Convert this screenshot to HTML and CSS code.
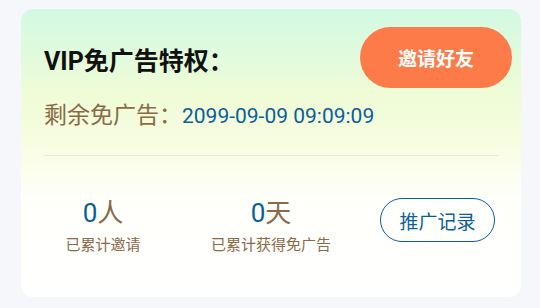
FILE: index.html
```html
<!DOCTYPE html>
<html lang="zh">
<head>
    <meta charset="UTF-8">
    <meta name="viewport" content="width=device-width, initial-scale=1.0">
    <title>VIP</title>
    <link rel="stylesheet" href="styles.css">
</head>
<body>
    <div class="card">
        <div class="head">
            <div class="title">VIP免广告特权：</div>
            <div class="invite">邀请好友</div>
        </div>
        <div class="remain">
            <span class="remain-label">剩余免广告：</span><span class="remain-time">2099-09-09 09:09:09</span>
        </div>
        <div class="line"></div>
        <div class="stats">
            <div class="stat first">
                <div class="num"><span class="digit">0</span>人</div>
                <div class="label">已累计邀请</div>
            </div>
            <div class="stat second">
                <div class="num"><span class="digit">0</span>天</div>
                <div class="label">已累计获得免广告</div>
            </div>
            <div class="record">推广记录</div>
        </div>
    </div>
</body>
</html>
```

FILE: styles.css
```css
body {
    margin: 0;
    background-color: #f5f7fb;
    font-family: Roboto, "Noto Sans CJK SC", sans-serif;
}

.card {
    margin: 9px 0 0 21px;
    width: 500px;
    height: 288px;
    box-sizing: border-box;
    padding: 18px 9px 0 23px;
    border-radius: 12px;
    background: linear-gradient(180deg, #d1f9e3 0%, #effcd6 30%, #f8fde2 48%, #fffffb 66%, #ffffff 100%);
}

.head {
    display: flex;
    justify-content: space-between;
    align-items: center;
    height: 61px;
}

.title {
    font-size: 25px;
    font-weight: bold;
    color: #111;
    margin-top: 2px;
}

.invite {
    width: 152px;
    height: 61px;
    border-radius: 31px;
    background-color: #fd7b49;
    color: #fff;
    font-size: 19px;
    font-weight: bold;
    display: flex;
    justify-content: center;
    align-items: center;
}

.remain {
    margin-top: 13px;
    height: 30px;
    line-height: 30px;
}

.remain-label {
    font-size: 23px;
    color: #8b6a48;
}

.remain-time {
    font-size: 21px;
    color: #0b5f99;
}

.line {
    margin: 24px 14px 0 0;
    height: 1px;
    background-color: #efe6cc;
}

.stats {
    display: flex;
    align-items: center;
    margin-top: 42px;
}

.stat {
    text-align: center;
}

.first {
    width: 118px;
}

.second {
    width: 218px;
}

.num {
    font-size: 26px;
    line-height: 30px;
    color: #8b6a48;
}

.digit {
    color: #0b5f99;
}

.label {
    margin-top: 5px;
    font-size: 15px;
    color: #8b6a48;
}

.record {
    width: 115px;
    height: 44px;
    box-sizing: border-box;
    border: 1.5px solid #0b5f99;
    border-radius: 22px;
    color: #0b5f99;
    font-size: 19px;
    display: flex;
    justify-content: center;
    align-items: center;
    margin-top: -12px;
}
```
